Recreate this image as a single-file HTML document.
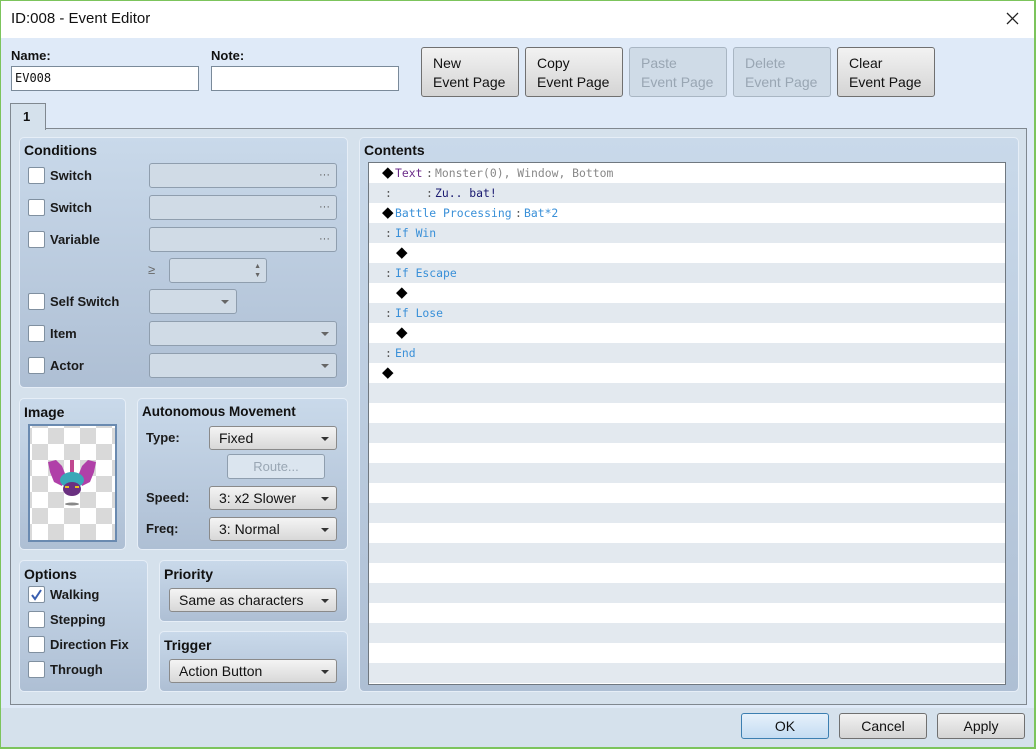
<!DOCTYPE html>
<html><head><meta charset="utf-8"><style>
*{box-sizing:border-box;margin:0;padding:0}
body{width:1036px;height:749px;position:relative;overflow:hidden;font-family:"Liberation Sans","DejaVu Sans",sans-serif;font-size:14px;color:#111;background:#d5e1ec}
.a{position:absolute}
.title{left:0;top:0;width:1036px;height:38px;background:#fff;border-top:1px solid #7cc45c}
.lb{font-size:14px;white-space:nowrap}
.b{font-weight:bold}
.s{font-size:13px;font-weight:bold;color:#1a1a1a}
.inp{background:#fff;border:1px solid #7a8a9a;font-family:"DejaVu Sans Mono","Liberation Mono",monospace;font-size:12px;padding:4px 3px}
.btn{background:linear-gradient(#f2f2f2,#d4d4d4);border:1px solid #707070;border-radius:3px;padding:6px 11px;line-height:19px;font-size:14px}
.dis{background:#cfdbe7;border-color:#a9b6c3;color:#99a6b3}
.grp{background:linear-gradient(#c9d9ea,#aebfd4);border:1px solid #e6eef7;border-radius:5px}
.cb{width:17px;height:17px;background:#fff;border:1px solid #8090a0;border-radius:2px}
.fld{background:#d0dbe6;border:1px solid #8f9eae;border-radius:3px}
.dd{background:linear-gradient(#f4f4f4,#d8d8d8);border:1px solid #8a8a8a;border-radius:3px;padding:3px 9px;font-size:14px;line-height:17px}
.arr{position:absolute;right:7px;top:10px;width:0;height:0;border-left:4px solid transparent;border-right:4px solid transparent;border-top:4px solid #333}
.row{position:absolute;left:0;width:636px;height:20px;font-family:"DejaVu Sans Mono","Liberation Mono",monospace;font-size:11.4px;line-height:21px;white-space:pre}
.row span{position:absolute;top:0}
.dm{font-size:15px;line-height:19px;color:#000;font-family:"DejaVu Sans",sans-serif}
.c{color:#555}.bl{color:#3a90d8}
</style></head><body>
<div class="a title"></div>
<div class="a lb" style="left:11px;top:10px;font-size:15px">ID:008 - Event Editor</div>
<svg class="a" style="left:1006px;top:12px" width="13" height="13"><path d="M1 1L12 12M12 1L1 12" stroke="#222" stroke-width="1.3"/></svg>
<div class="a" style="left:0;top:38px;width:1036px;height:670px;background:#dfeaf8"></div>
<div class="a" style="left:1034px;top:0;width:2px;height:749px;background:#7cc45c"></div>
<div class="a" style="left:0;top:0;width:1px;height:749px;background:#7cc45c"></div>
<div class="a" style="left:0;top:747px;width:1036px;height:2px;background:#7cc45c"></div>

<div class="a lb b" style="left:11px;top:48px;font-size:13px">Name:</div>
<div class="a inp" style="left:11px;top:66px;width:188px;height:25px">EV008</div>
<div class="a lb b" style="left:211px;top:48px;font-size:13px">Note:</div>
<div class="a inp" style="left:211px;top:66px;width:188px;height:25px"></div>

<div class="a btn" style="left:421px;top:47px;width:98px;height:50px">New<br>Event Page</div>
<div class="a btn" style="left:525px;top:47px;width:98px;height:50px">Copy<br>Event Page</div>
<div class="a btn dis" style="left:629px;top:47px;width:98px;height:50px">Paste<br>Event Page</div>
<div class="a btn dis" style="left:733px;top:47px;width:98px;height:50px">Delete<br>Event Page</div>
<div class="a btn" style="left:837px;top:47px;width:98px;height:50px">Clear<br>Event Page</div>

<div class="a" style="left:10px;top:128px;width:1017px;height:577px;background:#d5e1ec;border:1px solid #808890"></div>
<div class="a b" style="left:10px;top:103px;width:36px;height:27px;background:#d5e1ec;border:1px solid #808890;border-bottom:none;padding:5px 12px;font-size:13px">1</div>

<!-- Conditions -->
<div class="a grp" style="left:19px;top:137px;width:329px;height:251px"></div>
<div class="a lb b" style="left:24px;top:142px">Conditions</div>
<div class="a cb" style="left:28px;top:167px"></div><div class="a lb s" style="left:50px;top:168px">Switch</div>
<div class="a fld" style="left:149px;top:163px;width:188px;height:25px"><span style="position:absolute;right:6px;top:6px;font-size:11px;line-height:11px;color:#555">···</span></div>
<div class="a cb" style="left:28px;top:199px"></div><div class="a lb s" style="left:50px;top:200px">Switch</div>
<div class="a fld" style="left:149px;top:195px;width:188px;height:25px"><span style="position:absolute;right:6px;top:6px;font-size:11px;line-height:11px;color:#555">···</span></div>
<div class="a cb" style="left:28px;top:231px"></div><div class="a lb s" style="left:50px;top:232px">Variable</div>
<div class="a fld" style="left:149px;top:227px;width:188px;height:25px"><span style="position:absolute;right:6px;top:6px;font-size:11px;line-height:11px;color:#555">···</span></div>
<div class="a lb" style="left:148px;top:262px;color:#666;font-size:13px">≥</div>
<div class="a fld" style="left:169px;top:258px;width:98px;height:25px"><span style="position:absolute;right:5px;top:3px;font-size:7px;color:#666;line-height:9px">▲<br>▼</span></div>
<div class="a cb" style="left:28px;top:293px"></div><div class="a lb s" style="left:50px;top:294px">Self Switch</div>
<div class="a fld" style="left:149px;top:289px;width:88px;height:25px"><div class="arr" style="border-top-color:#666"></div></div>
<div class="a cb" style="left:28px;top:325px"></div><div class="a lb s" style="left:50px;top:326px">Item</div>
<div class="a fld" style="left:149px;top:321px;width:188px;height:25px"><div class="arr" style="border-top-color:#666"></div></div>
<div class="a cb" style="left:28px;top:357px"></div><div class="a lb s" style="left:50px;top:358px">Actor</div>
<div class="a fld" style="left:149px;top:353px;width:188px;height:25px"><div class="arr" style="border-top-color:#666"></div></div>

<!-- Image -->
<div class="a grp" style="left:19px;top:398px;width:107px;height:152px"></div>
<div class="a lb b" style="left:24px;top:404px">Image</div>
<div class="a" style="left:28px;top:424px;width:89px;height:118px;border:2px solid #6a8ab0;background-color:#fff;background-image:linear-gradient(45deg,#d9d9d9 25%,transparent 25%,transparent 75%,#d9d9d9 75%),linear-gradient(45deg,#d9d9d9 25%,transparent 25%,transparent 75%,#d9d9d9 75%);background-size:32px 32px;background-position:2px 2px,18px 18px"></div>
<svg class="a" style="left:46px;top:458px" width="52" height="50" viewBox="0 0 52 50">
<path d="M2 4 L10 2 L16 8 L20 18 L16 28 L8 24 L4 14 Z" fill="#b040a8"/>
<path d="M50 4 L42 2 L36 8 L32 18 L36 28 L44 24 L48 14 Z" fill="#b040a8"/>
<path d="M24 2 L28 2 L28 16 L24 16 Z" fill="#c04890"/>
<ellipse cx="26" cy="22" rx="12" ry="8" fill="#3aa8b8"/>
<ellipse cx="26" cy="31" rx="9" ry="7" fill="#6a3080"/>
<rect x="19" y="28" width="4" height="2" fill="#e8c020"/><rect x="29" y="28" width="4" height="2" fill="#e8c020"/>
<ellipse cx="26" cy="46" rx="7" ry="1.5" fill="#888"/>
</svg>

<!-- Autonomous -->
<div class="a grp" style="left:137px;top:398px;width:211px;height:152px"></div>
<div class="a lb b" style="left:142px;top:404px;font-size:13.5px">Autonomous Movement</div>
<div class="a lb s" style="left:146px;top:430px">Type:</div>
<div class="a dd" style="left:209px;top:426px;width:128px;height:24px">Fixed<div class="arr"></div></div>
<div class="a fld" style="left:227px;top:454px;width:98px;height:25px;color:#99a6b3;text-align:center;font-size:13px;line-height:23px;background:#dbe5ef">Route...</div>
<div class="a lb s" style="left:146px;top:490px">Speed:</div>
<div class="a dd" style="left:209px;top:486px;width:128px;height:24px">3: x2 Slower<div class="arr"></div></div>
<div class="a lb s" style="left:146px;top:521px">Freq:</div>
<div class="a dd" style="left:209px;top:517px;width:128px;height:24px">3: Normal<div class="arr"></div></div>

<!-- Options -->
<div class="a grp" style="left:19px;top:560px;width:129px;height:132px"></div>
<div class="a lb b" style="left:24px;top:566px">Options</div>
<div class="a cb" style="left:28px;top:586px"></div><svg class="a" style="left:30px;top:588px" width="13" height="13"><path d="M2 7L5 11L11 2" stroke="#3a5fb0" stroke-width="2" fill="none"/></svg><div class="a lb s" style="left:50px;top:587px">Walking</div>
<div class="a cb" style="left:28px;top:611px"></div><div class="a lb s" style="left:50px;top:612px">Stepping</div>
<div class="a cb" style="left:28px;top:636px"></div><div class="a lb s" style="left:50px;top:637px">Direction Fix</div>
<div class="a cb" style="left:28px;top:661px"></div><div class="a lb s" style="left:50px;top:662px">Through</div>

<div class="a grp" style="left:159px;top:560px;width:189px;height:62px"></div>
<div class="a lb b" style="left:164px;top:566px">Priority</div>
<div class="a dd" style="left:169px;top:588px;width:168px;height:24px">Same as characters<div class="arr"></div></div>
<div class="a grp" style="left:159px;top:631px;width:189px;height:61px"></div>
<div class="a lb b" style="left:164px;top:637px">Trigger</div>
<div class="a dd" style="left:169px;top:659px;width:168px;height:24px">Action Button<div class="arr"></div></div>

<!-- Contents -->
<div class="a grp" style="left:359px;top:137px;width:660px;height:555px"></div>
<div class="a lb b" style="left:364px;top:142px">Contents</div>
<div class="a" style="left:368px;top:162px;width:638px;height:523px;border:1px solid #707880;background:repeating-linear-gradient(#fff 0 20px,#e3e9ef 20px 40px);overflow:hidden">
<div class="row" style="top:0"><span class="dm" style="left:13px">◆</span><span style="left:26px;color:#6a2a88">Text</span><span class="c" style="left:57px">:</span><span style="left:66px;color:#888">Monster(0), Window, Bottom</span></div>
<div class="row" style="top:20px"><span class="c" style="left:16px">:</span><span class="c" style="left:57px">:</span><span style="left:66px;color:#1a1a70">Zu.. bat!</span></div>
<div class="row" style="top:40px"><span class="dm" style="left:13px">◆</span><span class="bl" style="left:26px">Battle Processing</span><span class="c" style="left:146px">:</span><span class="bl" style="left:155px">Bat*2</span></div>
<div class="row" style="top:60px"><span class="c" style="left:16px">:</span><span class="bl" style="left:26px">If Win</span></div>
<div class="row" style="top:80px"><span class="dm" style="left:27px">◆</span></div>
<div class="row" style="top:100px"><span class="c" style="left:16px">:</span><span class="bl" style="left:26px">If Escape</span></div>
<div class="row" style="top:120px"><span class="dm" style="left:27px">◆</span></div>
<div class="row" style="top:140px"><span class="c" style="left:16px">:</span><span class="bl" style="left:26px">If Lose</span></div>
<div class="row" style="top:160px"><span class="dm" style="left:27px">◆</span></div>
<div class="row" style="top:180px"><span class="c" style="left:16px">:</span><span class="bl" style="left:26px">End</span></div>
<div class="row" style="top:200px"><span class="dm" style="left:13px">◆</span></div>
</div>

<div class="a btn" style="left:741px;top:713px;width:88px;height:26px;padding:0;text-align:center;line-height:24px;background:linear-gradient(#e6f1fb,#c4dcf2);border-color:#3c7fb1">OK</div>
<div class="a btn" style="left:839px;top:713px;width:88px;height:26px;padding:0;text-align:center;line-height:24px">Cancel</div>
<div class="a btn" style="left:937px;top:713px;width:88px;height:26px;padding:0;text-align:center;line-height:24px">Apply</div>
</body></html>
